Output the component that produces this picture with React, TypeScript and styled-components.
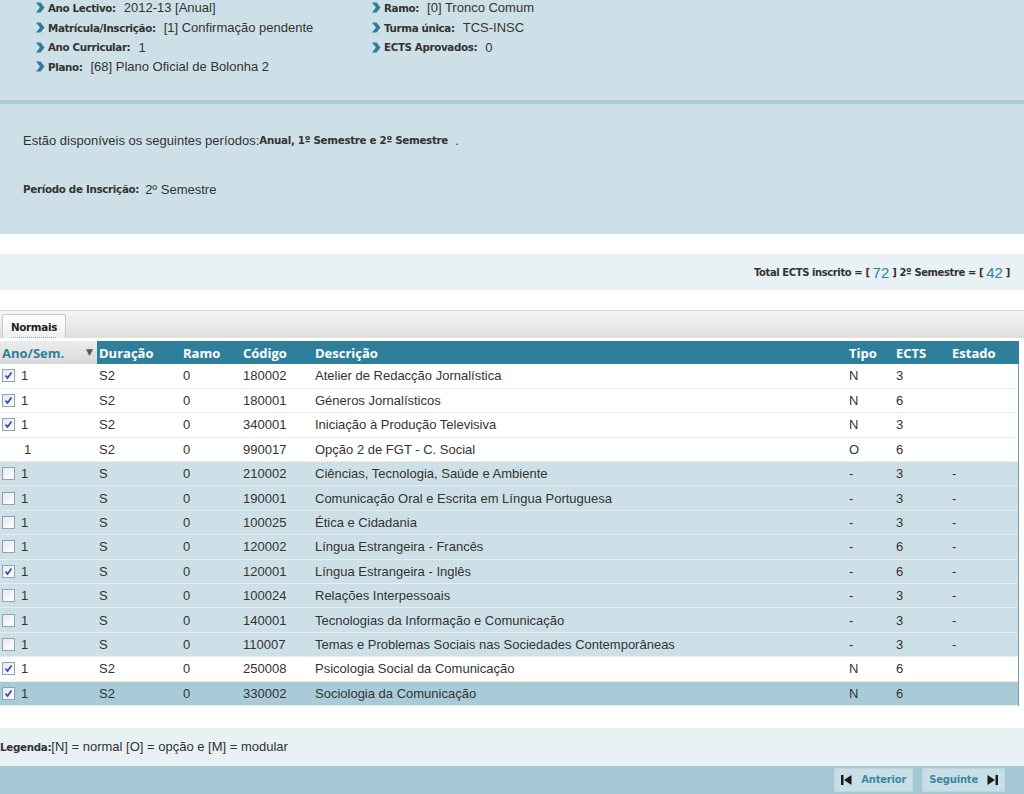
import styled, { createGlobalStyle } from "styled-components";

const GlobalStyle = createGlobalStyle`
  body {
    margin: 0;
    background: #ffffff;
    font-family: "Liberation Sans", Arial, sans-serif;
    font-size: 13px;
    color: #333;
  }
`;

const Page = styled.div`
  width: 1024px;
  height: 794px;
  overflow: hidden;
`;

const InfoPanel = styled.div`
  background: #cde0e7;
  height: 104px;
  border-bottom: 4px solid #a8cbd7;
  display: grid;
  grid-template-columns: 336px 1fr;
  padding-left: 34px;
  box-sizing: border-box;
`;

const InfoCol = styled.div`
  display: flex;
  flex-direction: column;
  margin-top: -2px;
`;

const InfoRow = styled.div`
  display: flex;
  align-items: center;
  height: 19.7px;
  font-size: 13px;
  color: #333;
`;

const Arrow = () => (
  <svg width="11" height="11" viewBox="0 0 11 11" style={{ marginRight: 3 }}>
    <path d="M2 0.5 L6.5 0.5 L10.5 5.5 L6.5 10.5 L2 10.5 L6 5.5 Z" fill="#2c7c99" />
  </svg>
);

const Label = styled.span`
  font-family: "DejaVu Sans", Verdana, sans-serif;
  font-weight: bold;
  font-size: 10.3px;
  letter-spacing: -0.35px;
  color: #333;
  margin-right: 8px;
`;

const PeriodPanel = styled.div`
  background: #cde0e7;
  height: 130px;
  padding: 22px 23px 0;
  box-sizing: border-box;
  font-size: 13px;
`;

const PeriodLine = styled.div`
  height: 28px;
  display: flex;
  align-items: center;
`;

const Small = styled.span`
  font-family: "DejaVu Sans", Verdana, sans-serif;
  font-weight: bold;
  font-size: 10.3px;
  letter-spacing: -0.3px;
`;

const TotalBand = styled.div`
  margin-top: 20px;
  height: 36px;
  background: #e8f1f4;
  display: flex;
  align-items: center;
  justify-content: flex-end;
  padding-right: 14px;
  font-family: "DejaVu Sans", Verdana, sans-serif;
  font-weight: bold;
  font-size: 10px;
  letter-spacing: -0.4px;
`;

const Num = styled.span`
  font-family: "Liberation Sans", Arial, sans-serif;
  font-weight: normal;
  font-size: 15px;
  letter-spacing: 0;
  color: #2e7f9c;
  margin: 0 3px;
`;

const TabBar = styled.div`
  margin-top: 20px;
  height: 28px;
  border-top: 1px solid #d6d6d6;
  background: linear-gradient(#f6f6f6, #dedede);
  display: flex;
  align-items: flex-end;
  padding-left: 2px;
  box-sizing: border-box;
`;

const Tab = styled.div`
  height: 23px;
  padding: 0 8px;
  display: flex;
  align-items: center;
  background: linear-gradient(#ffffff, #efefef);
  border: 1px solid #c8c8c8;
  border-bottom: none;
  border-radius: 3px 3px 0 0;
  font-family: "DejaVu Sans", Verdana, sans-serif;
  font-weight: bold;
  font-size: 10.3px;
  letter-spacing: -0.3px;
  color: #222;
  text-decoration: underline dotted #9ab;
  text-underline-offset: 6px;
`;

const Table = styled.table`
  width: 1019px;
  border-collapse: collapse;
  margin-top: 3px;
`;

const Th = styled.th<{ $sorted?: boolean }>`
  height: 23px;
  padding: 0 0 0 2px;
  text-align: left;
  font-family: "Open Sans", "DejaVu Sans", sans-serif;
  font-weight: bold;
  font-size: 13px;
  color: ${(p) => (p.$sorted ? "#2e7f9c" : "#ffffff")};
  background: ${(p) => (p.$sorted ? "linear-gradient(#ededed, #d9d9d9)" : "#2e7f9c")};
  position: relative;
`;

const SortIcon = styled.span`
  position: absolute;
  right: 4px;
  top: 4px;
  font-size: 9px;
  color: #555;
`;

const Tr = styled.tr<{ $tone: "white" | "blue" | "active" }>`
  height: 24.4px;
  background: ${(p) =>
    p.$tone === "white" ? "#ffffff" : p.$tone === "blue" ? "#cde0e7" : "#a8cbd7"};
  border-bottom: 1px solid ${(p) => (p.$tone === "white" ? "#ececec" : "#e4eef2")};
  td:last-child {
    border-right: 1px solid #6b9fb1;
  }
`;

const Td = styled.td`
  padding: 0 0 0 2px;
  font-size: 13px;
  color: #333;
  white-space: nowrap;
`;

const First = styled.div`
  display: flex;
  align-items: center;
  gap: 6px;
`;

const Box = styled.span<{ $hidden?: boolean }>`
  width: 11px;
  height: 11px;
  border: 1px solid #8fa3b0;
  background: linear-gradient(135deg, #e4e9ee, #ffffff);
  display: inline-flex;
  align-items: center;
  justify-content: center;
  visibility: ${(p) => (p.$hidden ? "hidden" : "visible")};
  margin-left: ${(p) => (p.$hidden ? "3px" : "0")};
`;

const Check = () => (
  <svg width="9" height="9" viewBox="0 0 9 9">
    <path d="M1.5 4.5 L3.5 7 L7.5 1.5" stroke="#3a4fb4" strokeWidth="1.8" fill="none" />
  </svg>
);

const LegendBand = styled.div`
  margin-top: 22px;
  height: 38px;
  background: #e8f1f4;
  display: flex;
  align-items: center;
  font-size: 13px;
`;

const BottomBar = styled.div`
  height: 28px;
  background: #a5c9d4;
  display: flex;
  justify-content: flex-end;
  align-items: center;
  gap: 9px;
  padding-right: 19px;
`;

const NavButton = styled.div`
  height: 24px;
  box-sizing: border-box;
  border: 1px solid #bcd6df;
  background: #c9dfe6;
  display: flex;
  align-items: center;
  gap: 9px;
  padding: 0 6px;
  font-family: "DejaVu Sans", Verdana, sans-serif;
  font-weight: bold;
  font-size: 10px;
  letter-spacing: -0.2px;
  color: #3a87a4;
`;

const SkipIcon = ({ flip }: { flip?: boolean }) => (
  <svg width="11" height="10" viewBox="0 0 11 10" style={flip ? { transform: "scaleX(-1)" } : undefined}>
    <rect x="0" y="0" width="2.5" height="10" fill="#1b1b1b" />
    <path d="M3 5 L10.5 0 L10.5 10 Z" fill="#1b1b1b" />
  </svg>
);

type Row = {
  box: "on" | "off" | "none";
  dur: string;
  code: string;
  desc: string;
  tipo: string;
  ects: string;
  estado: string;
  tone: "white" | "blue" | "active";
};

const rows: Row[] = [
  { box: "on", dur: "S2", code: "180002", desc: "Atelier de Redacção Jornalística", tipo: "N", ects: "3", estado: "", tone: "white" },
  { box: "on", dur: "S2", code: "180001", desc: "Géneros Jornalísticos", tipo: "N", ects: "6", estado: "", tone: "white" },
  { box: "on", dur: "S2", code: "340001", desc: "Iniciação à Produção Televisiva", tipo: "N", ects: "3", estado: "", tone: "white" },
  { box: "none", dur: "S2", code: "990017", desc: "Opção 2 de FGT - C. Social", tipo: "O", ects: "6", estado: "", tone: "white" },
  { box: "off", dur: "S", code: "210002", desc: "Ciências, Tecnologia, Saúde e Ambiente", tipo: "-", ects: "3", estado: "-", tone: "blue" },
  { box: "off", dur: "S", code: "190001", desc: "Comunicação Oral e Escrita em Língua Portuguesa", tipo: "-", ects: "3", estado: "-", tone: "blue" },
  { box: "off", dur: "S", code: "100025", desc: "Ética e Cidadania", tipo: "-", ects: "3", estado: "-", tone: "blue" },
  { box: "off", dur: "S", code: "120002", desc: "Língua Estrangeira - Francês", tipo: "-", ects: "6", estado: "-", tone: "blue" },
  { box: "on", dur: "S", code: "120001", desc: "Língua Estrangeira - Inglês", tipo: "-", ects: "6", estado: "-", tone: "blue" },
  { box: "off", dur: "S", code: "100024", desc: "Relações Interpessoais", tipo: "-", ects: "3", estado: "-", tone: "blue" },
  { box: "off", dur: "S", code: "140001", desc: "Tecnologias da Informação e Comunicação", tipo: "-", ects: "3", estado: "-", tone: "blue" },
  { box: "off", dur: "S", code: "110007", desc: "Temas e Problemas Sociais nas Sociedades Contemporâneas", tipo: "-", ects: "3", estado: "-", tone: "blue" },
  { box: "on", dur: "S2", code: "250008", desc: "Psicologia Social da Comunicação", tipo: "N", ects: "6", estado: "", tone: "white" },
  { box: "on", dur: "S2", code: "330002", desc: "Sociologia da Comunicação", tipo: "N", ects: "6", estado: "", tone: "active" },
];

export default function App() {
  return (
    <Page>
      <GlobalStyle />
      <InfoPanel>
        <InfoCol>
          <InfoRow><Arrow /><Label>Ano Lectivo:</Label>2012-13 [Anual]</InfoRow>
          <InfoRow><Arrow /><Label>Matrícula/Inscrição:</Label>[1] Confirmação pendente</InfoRow>
          <InfoRow><Arrow /><Label>Ano Curricular:</Label>1</InfoRow>
          <InfoRow><Arrow /><Label>Plano:</Label>[68] Plano Oficial de Bolonha 2</InfoRow>
        </InfoCol>
        <InfoCol>
          <InfoRow><Arrow /><Label>Ramo:</Label>[0] Tronco Comum</InfoRow>
          <InfoRow><Arrow /><Label>Turma única:</Label>TCS-INSC</InfoRow>
          <InfoRow><Arrow /><Label>ECTS Aprovados:</Label>0</InfoRow>
        </InfoCol>
      </InfoPanel>

      <PeriodPanel>
        <PeriodLine>
          Estão disponíveis os seguintes períodos:<Small>Anual, 1º Semestre e 2º Semestre</Small>&nbsp;&nbsp;.
        </PeriodLine>
        <PeriodLine style={{ marginTop: 21 }}>
          <Small style={{ marginRight: 6 }}>Período de Inscrição:</Small>2º Semestre
        </PeriodLine>
      </PeriodPanel>

      <TotalBand>
        Total ECTS inscrito = [<Num>72</Num>] 2º Semestre = [<Num>42</Num>]
      </TotalBand>

      <TabBar>
        <Tab>Normais</Tab>
      </TabBar>

      <Table>
        <colgroup>
          <col style={{ width: 97 }} />
          <col style={{ width: 84 }} />
          <col style={{ width: 60 }} />
          <col style={{ width: 72 }} />
          <col style={{ width: 534 }} />
          <col style={{ width: 47 }} />
          <col style={{ width: 56 }} />
          <col />
        </colgroup>
        <thead>
          <tr>
            <Th $sorted>Ano/Sem.<SortIcon>▼</SortIcon></Th>
            <Th>Duração</Th>
            <Th>Ramo</Th>
            <Th>Código</Th>
            <Th>Descrição</Th>
            <Th>Tipo</Th>
            <Th>ECTS</Th>
            <Th>Estado</Th>
          </tr>
        </thead>
        <tbody>
          {rows.map((r) => (
            <Tr key={r.code} $tone={r.tone}>
              <Td>
                <First>
                  <Box $hidden={r.box === "none"}>
                    {r.box === "on" && <Check />}
                  </Box>
                  1
                </First>
              </Td>
              <Td>{r.dur}</Td>
              <Td>0</Td>
              <Td>{r.code}</Td>
              <Td>{r.desc}</Td>
              <Td>{r.tipo}</Td>
              <Td>{r.ects}</Td>
              <Td>{r.estado}</Td>
            </Tr>
          ))}
        </tbody>
      </Table>

      <LegendBand>
        <Small>Legenda:</Small>[N] = normal [O] = opção e [M] = modular
      </LegendBand>

      <BottomBar>
        <NavButton><SkipIcon />Anterior</NavButton>
        <NavButton>Seguinte<SkipIcon flip /></NavButton>
      </BottomBar>
    </Page>
  );
}
